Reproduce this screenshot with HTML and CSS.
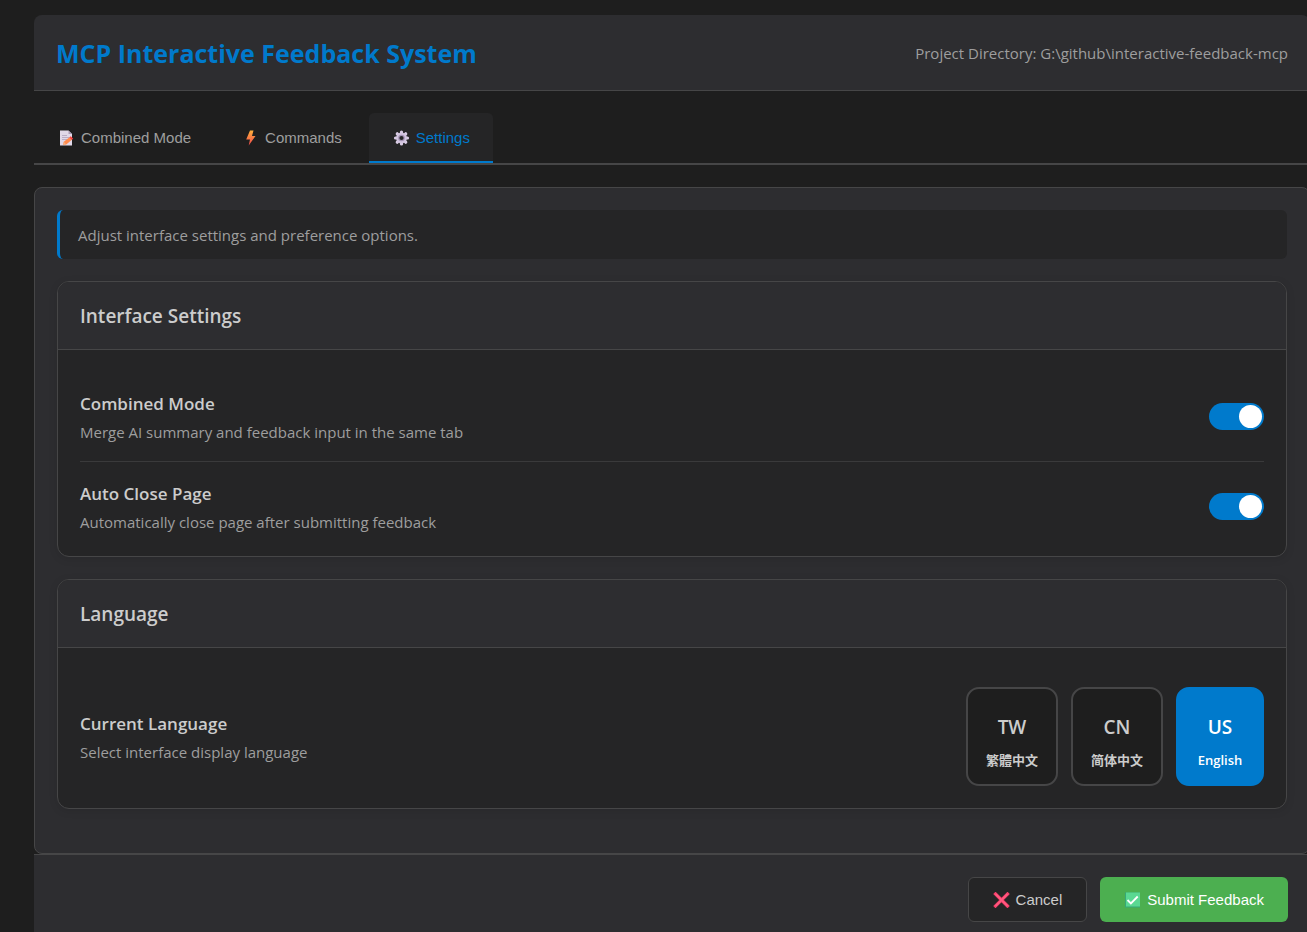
FILE: index.html
```html
<!DOCTYPE html>
<html lang="en">
<head>
<meta charset="utf-8">
<meta name="viewport" content="width=device-width, initial-scale=1">
<title>MCP Interactive Feedback System</title>
<link rel="stylesheet" href="styles.css">
</head>
<body>
<div class="page">
  <header class="header">
    <h1 class="header-title">MCP Interactive Feedback System</h1>
    <p class="header-path">Project Directory: G:\github\interactive-feedback-mcp</p>
  </header>

  <nav class="tabs" role="tablist">
    <button class="tab" type="button" role="tab" aria-selected="false">
      <svg class="icon" viewBox="0 0 21 16" aria-hidden="true">
        <path d="M4 .5h8.500L16 4v11.500H4z" fill="#e0d8e8"/>
        <path d="M12.500.5 16 4h-3.500z" fill="#a99bb5"/>
        <path d="M6 5.500h5M6 7.500h7M6 9.500h5" stroke="#b9adc6" stroke-width="1"/>
        <path d="m7 15 .8-3.200 5.400-4.300 2.400 2.600-5.400 4.400z" fill="#ff8a4c"/>
        <path d="m13.200 7.500 1.600-1.300 2.400 2.600-1.600 1.300z" fill="#f4433c"/>
        <path d="m7 15 .8-3.200 2.400 2.700z" fill="#f5b183"/>
      </svg>
      Combined Mode
    </button>
    <button class="tab" type="button" role="tab" aria-selected="false">
      <svg class="icon" viewBox="0 0 21 16" aria-hidden="true">
        <defs>
          <linearGradient id="bolt" x1="0" y1="0" x2="0" y2="1">
            <stop offset="0" stop-color="#ffb13b"/>
            <stop offset="1" stop-color="#f2484e"/>
          </linearGradient>
        </defs>
        <path d="M10 .5h3.500L12 6h3.500L8.700 15.500 10 9.500H6.200z" fill="url(#bolt)"/>
      </svg>
      Commands
    </button>
    <button class="tab tab-active" type="button" role="tab" aria-selected="true">
      <svg class="icon" viewBox="0 0 21 16" aria-hidden="true">
        <g stroke="#d9cce4" stroke-width="3.200" stroke-linecap="round">
          <path d="M10.500 2v12M4.500 8h12M6.260 3.760l8.480 8.480M14.740 3.760l-8.480 8.480"/>
        </g>
        <circle cx="10.500" cy="8" r="5.400" fill="#d2c4df"/>
        <circle cx="10.500" cy="8" r="3.300" fill="#a493b4"/>
        <circle cx="10.500" cy="8" r="2.100" fill="#252526"/>
      </svg>
      Settings
    </button>
  </nav>

  <main class="panel">
    <p class="info">Adjust interface settings and preference options.</p>

    <section class="card">
      <h2 class="card-title">Interface Settings</h2>
      <div class="card-body">
        <div class="row">
          <div class="row-text">
            <label class="row-title" for="combined">Combined Mode</label>
            <p class="row-desc">Merge AI summary and feedback input in the same tab</p>
          </div>
          <input class="toggle" type="checkbox" id="combined" checked>
        </div>
        <div class="row">
          <div class="row-text">
            <label class="row-title" for="autoclose">Auto Close Page</label>
            <p class="row-desc">Automatically close page after submitting feedback</p>
          </div>
          <input class="toggle" type="checkbox" id="autoclose" checked>
        </div>
      </div>
    </section>

    <section class="card">
      <h2 class="card-title">Language</h2>
      <div class="card-body">
        <div class="row">
          <div class="row-text">
            <h3 class="row-title">Current Language</h3>
            <p class="row-desc">Select interface display language</p>
          </div>
          <div class="languages">
            <button class="language" type="button"><span class="language-code">TW</span><span class="language-name" lang="zh-Hant">繁體中文</span></button>
            <button class="language" type="button"><span class="language-code">CN</span><span class="language-name language-name-sc" lang="zh-Hans">简体中文</span></button>
            <button class="language language-active" type="button" aria-pressed="true"><span class="language-code">US</span><span class="language-name">English</span></button>
          </div>
        </div>
      </div>
    </section>
  </main>

  <footer class="footer">
    <button class="action" type="button">
      <svg class="icon" viewBox="0 0 21 16" aria-hidden="true">
        <path d="M4.500 2 16.500 14M16.500 2 4.500 14" stroke="#f8416b" stroke-width="3.200" stroke-linecap="square"/>
        <path d="M4.500 2 16.500 14M16.500 2 4.500 14" stroke="#ff5c83" stroke-width="1.600"/>
      </svg>
      Cancel
    </button>
    <button class="action action-submit" type="button">
      <svg class="icon" viewBox="0 0 21 16" aria-hidden="true">
        <path d="M3 .5h15v15H3z" fill="#35a878"/>
        <path d="M4 .5h14v14H4z" fill="#5ad892"/>
        <path d="m5.500 8 3.400 3.500 6.800-7" fill="none" stroke="#fff" stroke-width="1.800"/>
      </svg>
      Submit Feedback
    </button>
  </footer>
</div>
</body>
</html>
```
FILE: styles.css
```css
* {
  box-sizing: border-box;
}

body {
  margin: 0;
  height: 100vh;
  overflow: hidden;
  background: #1e1e1e;
  color: #cccccc;
  font-family: "Open Sans", "Noto Sans", sans-serif;
  font-size: 15px;
  line-height: 24px;
}

h1, h2, h3, p {
  margin: 0;
}

button {
  cursor: pointer;
}

.page {
  margin: 15px -3px 0 34px;
}

.header {
  display: flex;
  align-items: center;
  justify-content: space-between;
  padding: 19px 22px 18px;
  background: #2d2d30;
  border-bottom: 1px solid #464647;
  border-radius: 8px 8px 0 0;
}

.header-title {
  color: #007acc;
  font-size: 25px;
  font-weight: 700;
  line-height: 38px;
}

.header-path {
  color: #9e9e9e;
}

.tabs {
  display: flex;
  gap: 4px;
  margin: 22px 0;
  border-bottom: 2px solid #464647;
}

.tab {
  display: flex;
  align-items: center;
  gap: 4px;
  padding: 14px 23px 12px 22px;
  border: 0;
  border-bottom: 2px solid transparent;
  border-radius: 5px 5px 0 0;
  background: transparent;
  color: #9e9e9e;
  font-family: "Liberation Sans", Arial, sans-serif;
  font-size: 15px;
  line-height: 22px;
}

.tab-active {
  border-bottom-color: #007acc;
  background: #252526;
  color: #007acc;
}

.icon {
  flex: none;
  width: 21px;
  height: 16px;
}

.panel {
  padding: 22px;
  background: #2d2d30;
  border: 1px solid #464647;
  border-radius: 8px;
}

.info {
  margin-bottom: 22px;
  padding: 13px 18px 12px;
  background: #252526;
  border-left: 3px solid #007acc;
  border-radius: 6px;
  color: #9e9e9e;
}

.card {
  margin-bottom: 22px;
  overflow: hidden;
  background: #252526;
  border: 1px solid #464647;
  border-radius: 12px;
  box-shadow: 0 2px 8px rgba(0, 0, 0, 0.1);
}

.card-title {
  padding: 20px 22px 19px;
  background: #2d2d30;
  border-bottom: 1px solid #464647;
  font-size: 19px;
  font-weight: 600;
  line-height: 28px;
}

.card-body {
  padding: 22px;
}

.row {
  display: flex;
  align-items: center;
  justify-content: space-between;
  padding: 17px 0;
  border-bottom: 1px solid #3a3a3b;
}

.row:last-child {
  padding-bottom: 0;
  border-bottom: 0;
}

.row-text {
  display: flex;
  flex-direction: column;
  gap: 2px;
}

.row-title {
  font-size: 17px;
  font-weight: 600;
  line-height: 29px;
}

.row-desc {
  color: #9e9e9e;
}

.toggle {
  flex: none;
  display: flex;
  justify-content: flex-end;
  align-items: center;
  width: 55px;
  height: 27px;
  margin: 0;
  padding: 2px;
  appearance: none;
  background: #007acc;
  border-radius: 14px;
  cursor: pointer;
}

.toggle::before {
  content: "";
  width: 23px;
  height: 23px;
  background: #ffffff;
  border-radius: 50%;
}

.toggle:not(:checked) {
  justify-content: flex-start;
  background: #464647;
}

.languages {
  display: flex;
  gap: 13px;
}

.language {
  display: flex;
  flex-direction: column;
  align-items: center;
  justify-content: center;
  gap: 5px;
  min-width: 88px;
  padding: 20px 18px 14px;
  background: #1e1e1e;
  border: 2px solid #464647;
  border-radius: 13px;
  color: #cccccc;
  font-family: "Open Sans", "Noto Sans CJK TC", sans-serif;
  font-weight: 600;
}

.language-active {
  background: #007acc;
  border-color: #007acc;
  color: #ffffff;
}

.language-code {
  font-size: 19px;
  line-height: 36px;
}

.language-name {
  font-size: 13px;
  line-height: 20px;
}

.language-name-sc {
  font-family: "Open Sans", "Noto Sans CJK SC", sans-serif;
}

.footer {
  display: flex;
  justify-content: flex-end;
  gap: 13px;
  padding: 22px;
  background: #2d2d30;
  border-top: 1px solid #464647;
}

.action {
  display: flex;
  align-items: center;
  gap: 4px;
  padding: 11px 24px 10px 22px;
  background: #252526;
  border: 1px solid #464647;
  border-radius: 6px;
  color: #cccccc;
  font-family: "Liberation Sans", Arial, sans-serif;
  font-size: 15px;
  line-height: 22px;
}

.action-submit {
  border: 0;
  background: #4caf50;
  color: #ffffff;
}
```
